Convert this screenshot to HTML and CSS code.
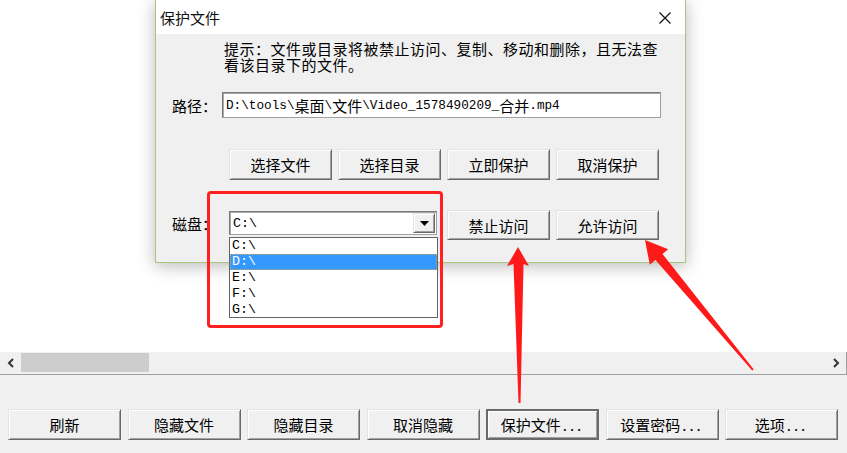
FILE: index.html
```html
<!DOCTYPE html>
<html lang="zh-CN">
<head>
<meta charset="utf-8">
<title>保护文件</title>
<link rel="stylesheet" href="styles.css">
</head>
<body>
<div class="app">
  <div class="listview"></div>
  <div class="hscroll">
    <span class="sarrow"><svg width="8" height="10" viewBox="0 0 8 10"><path d="M6 1 L2 5 L6 9" fill="none" stroke="#333" stroke-width="2"/></svg></span>
    <div class="track"><div class="thumb"></div></div>
    <span class="sarrow"><svg width="8" height="10" viewBox="0 0 8 10"><path d="M2 1 L6 5 L2 9" fill="none" stroke="#333" stroke-width="2"/></svg></span>
  </div>
  <div class="panel">
    <div class="btnrow">
      <button class="btn wide">刷新</button>
      <button class="btn wide">隐藏文件</button>
      <button class="btn wide">隐藏目录</button>
      <button class="btn wide">取消隐藏</button>
      <button class="btn wide default">保护文件<span class="dots">...</span></button>
      <button class="btn wide">设置密码<span class="dots">...</span></button>
      <button class="btn wide">选项<span class="dots">...</span></button>
    </div>
  </div>
</div>

<div class="dialog">
  <div class="titlebar">
    <span class="title">保护文件</span>
    <svg class="close" width="12" height="12" viewBox="0 0 12 12"><path d="M0.5 0.5 L11.5 11.5 M11.5 0.5 L0.5 11.5" stroke="#111" stroke-width="1.2" fill="none"/></svg>
  </div>
  <div class="dbody">
    <p class="hint">提示：文件或目录将被禁止访问、复制、移动和删除，且无法查<br>看该目录下的文件。</p>
    <div class="row pathrow">
      <span class="label">路径：</span>
      <div class="field">D:\tools\<span class="cj">桌面</span>\<span class="cj">文件</span>\Video_1578490209_<span class="cj">合并</span>.mp4</div>
    </div>
    <div class="row btns1">
      <button class="btn">选择文件</button>
      <button class="btn">选择目录</button>
      <button class="btn">立即保护</button>
      <button class="btn">取消保护</button>
    </div>
    <div class="row diskrow">
      <span class="label disklabel">磁盘：</span>
      <div class="combo">
        <span class="comboval">C:\</span>
        <span class="ddbtn"><svg width="9" height="5" viewBox="0 0 9 5"><path d="M0 0 H9 L4.5 5 Z" fill="#000"/></svg></span>
        <ul class="droplist">
          <li>C:\</li>
          <li class="sel">D:\</li>
          <li>E:\</li>
          <li>F:\</li>
          <li>G:\</li>
        </ul>
      </div>
      <div class="btns2">
        <button class="btn">禁止访问</button>
        <button class="btn">允许访问</button>
      </div>
    </div>
  </div>
</div>

<div class="highlight"></div>

<svg class="arrows" width="847" height="453" viewBox="0 0 847 453">
  <polygon fill="#ff1a1a" points="518,247 529,266 523.5,264 520.5,403 518.5,403 513.5,264 507,266"/>
  <polygon fill="#ff1a1a" points="645,240 668.2,249.3 662.5,254.1 753.8,369.4 752.2,370.6 655.5,259.9 649.8,264.7"/>
</svg>
</body>
</html>
```

FILE: styles.css
```css
* { box-sizing: border-box; }
html, body {
  margin: 0;
  padding: 0;
  width: 847px;
  height: 453px;
  overflow: hidden;
  background: #fff;
  font-family: "Noto Sans CJK SC", "Liberation Sans", sans-serif;
  color: #000;
}
.app {
  display: flex;
  flex-direction: column;
  height: 453px;
}
.listview {
  height: 352px;
  background: #fff;
}
.hscroll {
  height: 23px;
  display: flex;
  align-items: stretch;
  background: #f0f0f0;
  border-bottom: 1px solid #a0a0a0;
  border-right: 1px solid #a0a0a0;
}
.sarrow {
  width: 21px;
  display: flex;
  align-items: center;
  justify-content: center;
}
.track {
  flex: 1;
  padding: 1px 0 2px;
}
.thumb {
  width: 128px;
  height: 100%;
  background: #cdcdcd;
}
.panel {
  flex: 1;
  background: #f0f0f0;
  padding: 34px 0 0 8px;
}
.btnrow {
  display: flex;
  gap: 6.5px;
}
.btn {
  width: 103px;
  height: 31px;
  padding: 0;
  margin: 0;
  font-family: "Noto Sans CJK SC", "Liberation Sans", sans-serif;
  font-size: 15px;
  line-height: 1;
  color: #000;
  background: #f0f0f0;
  border: 1px solid;
  border-color: #e3e3e3 #696969 #696969 #e3e3e3;
  box-shadow: inset 1px 1px #ffffff, inset -1px -1px #a0a0a0;
}
.btn.wide { width: 113px; }
.btn.default {
  border: 2px solid #6a6a6a;
  box-shadow: inset 1px 1px #ffffff, inset -1px -1px #a0a0a0;
}
.dots {
  letter-spacing: 3px;
  margin-left: 2px;
}

.dialog {
  position: absolute;
  left: 155px;
  top: -1px;
  width: 531px;
  height: 264px;
  border: 1px solid #a9c67e;
  background: #f0f0f0;
  box-shadow: 0 3px 16px rgba(0, 0, 0, 0.28);
}
.titlebar {
  height: 34px;
  background: #fff;
  display: flex;
  align-items: center;
  justify-content: space-between;
  padding: 1px 14px 0 4px;
}
.title {
  font-size: 15px;
  line-height: 1;
  color: #111;
}
.dbody {
  display: flex;
  flex-direction: column;
}
.hint {
  margin: 7px 0 0;
  padding-left: 68px;
  font-size: 15px;
  line-height: 16px;
  letter-spacing: 0.5px;
  white-space: nowrap;
}
.row {
  display: flex;
  align-items: center;
}
.label {
  font-size: 15px;
  line-height: 1;
}
.pathrow {
  margin-top: 19px;
  padding-left: 16px;
}
.pathrow .label { width: 50px; }
.field {
  width: 439px;
  height: 26px;
  background: #fff;
  border: 1px solid;
  border-color: #7a7a7a #a0a0a0 #a0a0a0 #7a7a7a;
  box-shadow: inset 1px 1px #a8a8a8;
  padding: 0 3px;
  display: flex;
  align-items: center;
  font-family: "Liberation Mono", "Noto Sans CJK SC", monospace;
  font-size: 12.7px;
  white-space: nowrap;
}
.cj {
  font-family: "Noto Sans CJK SC", sans-serif;
  font-size: 15px;
}
.btns1 {
  margin-top: 31px;
  padding-left: 73px;
  gap: 6px;
}
.diskrow {
  margin-top: 30px;
  padding-left: 16px;
  align-items: flex-start;
}
.disklabel {
  width: 57px;
  margin-top: 6px;
}
.combo {
  position: relative;
  width: 208px;
  height: 24px;
  margin-top: 1px;
  background: #fff;
  border: 1px solid;
  border-color: #7a7a7a #a0a0a0 #a0a0a0 #7a7a7a;
  box-shadow: inset 1px 1px #a8a8a8;
  display: flex;
  align-items: center;
  justify-content: space-between;
  padding: 0 1px 0 3px;
  font-family: "Liberation Mono", monospace;
  font-size: 13.33px;
}
.ddbtn {
  width: 22px;
  height: 20px;
  display: flex;
  align-items: center;
  justify-content: center;
  background: #f0f0f0;
  border: 1px solid;
  border-color: #e3e3e3 #696969 #696969 #e3e3e3;
  box-shadow: inset 1px 1px #fff, inset -1px -1px #a0a0a0;
}
.droplist {
  position: absolute;
  left: -1px;
  top: 25px;
  width: 209px;
  height: 81px;
  margin: 0;
  padding: 0;
  list-style: none;
  background: #fff;
  border: 1px solid #646464;
}
.droplist li {
  height: 16px;
  line-height: 16px;
  padding-left: 2px;
}
.droplist li.sel {
  background: #3399ff;
  color: #fff;
  outline: 1px dotted #d9a15a;
  outline-offset: -1px;
}
.btns2 {
  display: flex;
  gap: 6px;
  margin-left: 10px;
}
.btns2 .btn { height: 30px; }

.highlight {
  position: absolute;
  left: 207px;
  top: 191px;
  width: 236px;
  height: 137px;
  border: 3px solid #ff2020;
  border-radius: 4px;
}
.arrows {
  position: absolute;
  left: 0;
  top: 0;
  pointer-events: none;
}
```
